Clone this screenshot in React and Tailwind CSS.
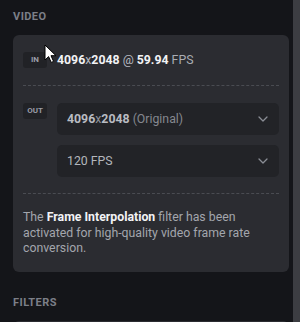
import React from "react";

const Badge = ({ children }) => (
  <div className="w-[24px] h-[16px] shrink-0 rounded-[3px] bg-[#212226] flex items-center justify-center text-[8px] font-bold text-[#9a9da6]">
    {children}
  </div>
);

const Chevron = () => (
  <svg width="10" height="6" viewBox="0 0 10 6" fill="none">
    <path d="M1 1l4 4 4-4" stroke="#8a8d95" strokeWidth="1.3" strokeLinecap="round" strokeLinejoin="round" />
  </svg>
);

const SelectBox = ({ children }) => (
  <div className="h-[32px] rounded-[5px] bg-[#222327] flex items-center justify-between pl-[10px] pr-[11px] text-[12.3px]">
    <span>{children}</span>
    <Chevron />
  </div>
);

const Cursor = () => (
  <svg className="absolute left-[44px] top-[44px]" width="13" height="20" viewBox="0 0 13 20">
    <path d="M1 1v15l3.6-3.4 2.6 5.8 2.4-1-2.6-5.7H12z" fill="#fff" stroke="#000" strokeWidth="1" strokeLinejoin="round" />
  </svg>
);

export default function App() {
  return (
    <div
      className="relative w-[300px] h-[322px] bg-[#141519] flex overflow-hidden"
      style={{ fontFamily: "Roboto, 'Liberation Sans', sans-serif" }}
    >
      <div className="w-[289px] pl-[13px] shrink-0">
        <div className="h-[35px] flex items-center text-[11px] font-bold tracking-[0.04em] text-[#7c7f88]">
          VIDEO
        </div>
        <div className="rounded-[6px] bg-[#2b2c31] px-[10px] pt-[16px] pb-[15px]">
          <div className="flex items-center gap-[10px]">
            <Badge>IN</Badge>
            <div className="text-[12.3px] text-[#a9acb3]">
              <span className="font-bold text-[#f2f3f5]">4096</span>
              <span className="text-[#b7bac0]">x</span>
              <span className="font-bold text-[#f2f3f5]">2048</span>
              <span className="text-[#b7bac0]"> @ </span>
              <span className="font-bold text-[#f2f3f5]">59.94</span>
              <span> FPS</span>
            </div>
          </div>
          <div className="mt-[16px] border-t border-dashed border-[#4a4c52]" />
          <div className="mt-[17px] flex items-start gap-[10px]">
            <Badge>OUT</Badge>
            <div className="w-[222px] flex flex-col gap-[10px]">
              <SelectBox>
                <span className="font-bold text-[#b9bcc2]">4096</span>
                <span className="text-[#8f929a]">x</span>
                <span className="font-bold text-[#b9bcc2]">2048</span>
                <span className="text-[#85888f]"> (Original)</span>
              </SelectBox>
              <SelectBox>
                <span className="text-[#b3b6bc]">120 FPS</span>
              </SelectBox>
            </div>
          </div>
          <div className="mt-[16px] border-t border-dashed border-[#4a4c52]" />
          <p className="mt-[16px] text-[12.3px] leading-[15.5px] text-[#a3a6ad]">
            The <span className="font-bold text-[#f2f3f5]">Frame Interpolation</span> filter has been
            activated for high-quality video frame rate conversion.
          </p>
        </div>
        <div className="pt-[25px] text-[11px] leading-[12px] font-bold tracking-[0.04em] text-[#7c7f88]">
          FILTERS
        </div>
        <div className="mt-[12px] h-[40px] rounded-[6px] bg-[#2b2c31]" />
      </div>
      <div className="ml-[4px] w-[7px] h-full bg-[#3c3d42]" />
      <Cursor />
    </div>
  );
}
